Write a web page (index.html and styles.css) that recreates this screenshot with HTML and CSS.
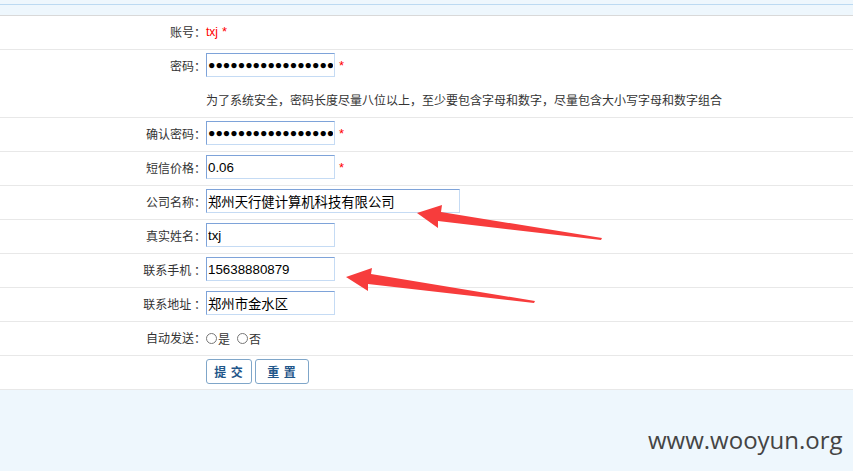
FILE: index.html
```html
<!DOCTYPE html>
<html lang="zh-CN">
<head>
<meta charset="utf-8">
<title>用户信息</title>
<link rel="stylesheet" href="styles.css">
</head>
<body>
<div class="page">
  <div class="topbar"></div>
  <form class="form">
    <div class="row">
      <div class="label">账号：</div>
      <div class="value"><span class="account">txj</span><span class="req">*</span></div>
    </div>
    <div class="row row-tall">
      <div class="label label-top">密码：</div>
      <div class="value-col">
        <div class="line"><input class="field field-pass" type="text" readonly value="●●●●●●●●●●●●●●●●●●●●"><span class="req">*</span></div>
        <div class="hint">为了系统安全，密码长度尽量八位以上，至少要包含字母和数字，尽量包含大小写字母和数字组合</div>
      </div>
    </div>
    <div class="row">
      <div class="label">确认密码：</div>
      <div class="value"><input class="field field-pass" type="text" readonly value="●●●●●●●●●●●●●●●●●●●●"><span class="req">*</span></div>
    </div>
    <div class="row">
      <div class="label">短信价格：</div>
      <div class="value"><input class="field" type="text" value="0.06"><span class="req">*</span></div>
    </div>
    <div class="row">
      <div class="label">公司名称：</div>
      <div class="value"><input class="field field-wide" type="text" value="郑州天行健计算机科技有限公司"></div>
    </div>
    <div class="row">
      <div class="label">真实姓名：</div>
      <div class="value"><input class="field" type="text" value="txj"></div>
    </div>
    <div class="row">
      <div class="label">联系手机 ：</div>
      <div class="value"><input class="field" type="text" value="15638880879"></div>
    </div>
    <div class="row">
      <div class="label">联系地址 ：</div>
      <div class="value"><input class="field" type="text" value="郑州市金水区"></div>
    </div>
    <div class="row">
      <div class="label">自动发送：</div>
      <div class="value radios">
        <span class="radio"></span><span class="opt">是</span>
        <span class="radio radio-second"></span><span class="opt">否</span>
      </div>
    </div>
    <div class="row row-buttons">
      <div class="label"></div>
      <div class="value buttons">
        <button type="button" class="btn btn-submit">提 交</button>
        <button type="button" class="btn btn-reset">重 置</button>
      </div>
    </div>
  </form>
  <div class="footer"></div>
  <div class="watermark">www.wooyun.org</div>
  <svg class="arrows" width="853" height="471" viewBox="0 0 853 471" xmlns="http://www.w3.org/2000/svg">
    <polygon fill="#f73c3c" points="417,213 442,205 441,212 602,238 601,240 438,221 438,228"/>
    <polygon fill="#f73c3c" points="346,277 372,268 371,274 535,301 534,303 368,284 368,291"/>
  </svg>
</div>
</body>
</html>
```
FILE: styles.css
```css
html, body {
  margin: 0;
  padding: 0;
  background: #ffffff;
}
.page {
  position: relative;
  width: 853px;
  height: 471px;
  overflow: hidden;
  display: flex;
  flex-direction: column;
  background: #eef7fd;
  font-family: "Noto Sans CJK SC", "Liberation Sans", sans-serif;
  font-size: 12px;
  color: #333333;
}
.topbar {
  height: 10px;
  margin-top: 4px;
  border-top: 1px solid #bcdaf2;
  border-bottom: 1px solid #d9d9d9;
  background: #eef7fd;
}
.form {
  margin: 0;
  background: #ffffff;
}
.row {
  display: flex;
  height: 33px;
  border-bottom: 1px solid #e8e8e8;
}
.row-tall {
  height: 67px;
}
.label {
  width: 206px;
  flex: none;
  text-align: right;
  display: flex;
  align-items: center;
  justify-content: flex-end;
  white-space: pre;
  line-height: 16px;
  padding-bottom: 1px;
  box-sizing: border-box;
}
.label-top {
  height: 33px;
}
.value {
  display: flex;
  align-items: center;
  padding-bottom: 3px;
  box-sizing: border-box;
}
.value-col {
  display: flex;
  flex-direction: column;
}
.line {
  height: 33px;
  display: flex;
  align-items: center;
  padding-bottom: 3px;
  box-sizing: border-box;
}
.hint {
  height: 34px;
  display: flex;
  align-items: center;
  line-height: 16px;
  padding-bottom: 1px;
  box-sizing: border-box;
}
.account {
  color: #ff0000;
  font-family: "Liberation Sans", sans-serif;
  font-size: 12px;
  margin-top: 1px;
}
.req {
  color: #ff0000;
  font-family: "Liberation Sans", sans-serif;
  font-size: 13px;
  margin-left: 4px;
  margin-top: 1px;
}
.field {
  box-sizing: border-box;
  width: 129px;
  height: 24px;
  margin: 0;
  padding: 0 1px;
  border: 1px solid;
  border-color: #7ea3d9 #c5dbf4 #c5dbf4 #7ea3d9;
  font-family: "Liberation Sans", "Noto Sans CJK SC", sans-serif;
  font-size: 13.333px;
  color: #000000;
  background: #ffffff;
  outline: none;
}
.field-pass {
  font-size: 12.3px;
  letter-spacing: 0;
}
.field-wide {
  width: 254px;
}
.radios {
  padding-bottom: 0;
}
.radio {
  width: 11px;
  height: 11px;
  box-sizing: border-box;
  border: 1px solid #777777;
  border-radius: 50%;
  background: #ffffff;
  margin-right: 1px;
}
.radio-second {
  margin-left: 7px;
}
.opt {
  line-height: 16px;
}
.buttons {
  align-items: flex-start;
  padding-top: 3px;
  padding-bottom: 0;
  gap: 3px;
}
.btn {
  height: 25px;
  box-sizing: border-box;
  margin: 0;
  padding: 0;
  border: 1px solid #7fa6c9;
  border-radius: 3px;
  background: #ffffff;
  color: #1f568a;
  font-family: "Noto Sans CJK SC", sans-serif;
  font-size: 12px;
  font-weight: bold;
  letter-spacing: 1px;
  white-space: pre;
}
.btn-submit {
  width: 46px;
}
.btn-reset {
  width: 54px;
}
.footer {
  flex: 1;
  background: #eef7fd;
}
.watermark {
  position: absolute;
  left: 648px;
  top: 428px;
  font-family: "Open Sans", sans-serif;
  font-size: 24px;
  line-height: 24px;
  color: #444444;
}
.arrows {
  position: absolute;
  left: 0;
  top: 0;
  pointer-events: none;
}
```
